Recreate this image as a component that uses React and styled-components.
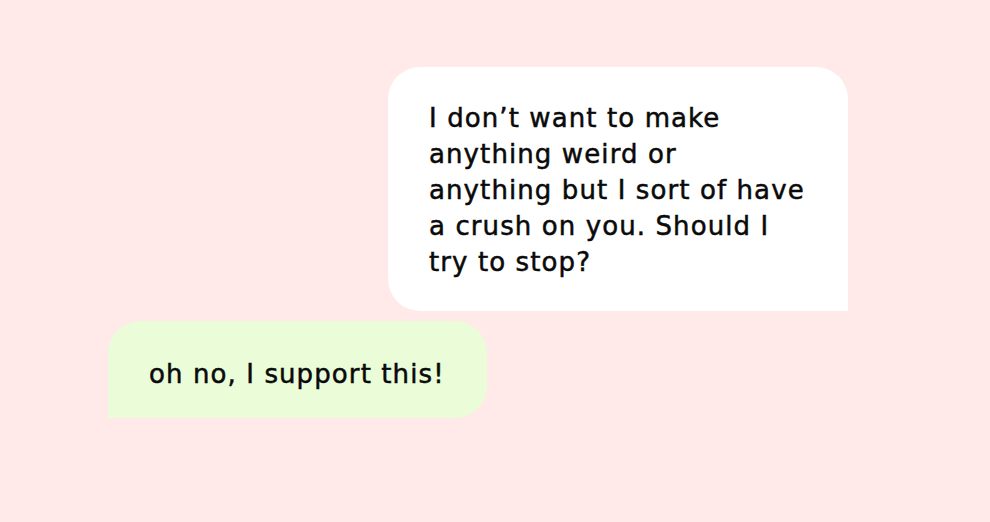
import React from "react";
import styled, { createGlobalStyle } from "styled-components";

const Global = createGlobalStyle`
  html, body { margin: 0; padding: 0; background: #ffe9e9; }
  body { font-family: "DejaVu Sans", "Liberation Sans", sans-serif; }
`;

const Page = styled.div`
  width: 990px;
  height: 522px;
  background: #ffe9e9;
  box-sizing: border-box;
  padding: 67px 142px 0 108px;
  display: flex;
  flex-direction: column;
  gap: 10px;
`;

const Bubble = styled.div`
  box-sizing: border-box;
  font-family: "DejaVu Sans", "Liberation Sans", sans-serif;
  font-size: 26px;
  font-weight: 400;
  line-height: 36px;
  letter-spacing: 1.1px;
  color: #0a0a0a;
  -webkit-text-stroke: 0.5px #0a0a0a;
  align-self: ${(p) => (p.$mine ? "flex-end" : "flex-start")};
  background: ${(p) => (p.$mine ? "#ffffff" : "#eafdd8")};
  border-radius: ${(p) => (p.$mine ? "32px 32px 0 32px" : "32px 32px 32px 0")};
  width: ${(p) => (p.$mine ? "460px" : "auto")};
  height: ${(p) => (p.$mine ? "244px" : "97px")};
  padding: ${(p) => (p.$mine ? "33px 42px 31px 41px" : "35px 42px 26px 41px")};
`;

export default function App() {
  return (
    <>
      <Global />
      <Page>
        <Bubble $mine>
          I don’t want to make anything weird or anything but I sort of have a crush on you. Should I try to stop?
        </Bubble>
        <Bubble>oh no, I support this!</Bubble>
      </Page>
    </>
  );
}
